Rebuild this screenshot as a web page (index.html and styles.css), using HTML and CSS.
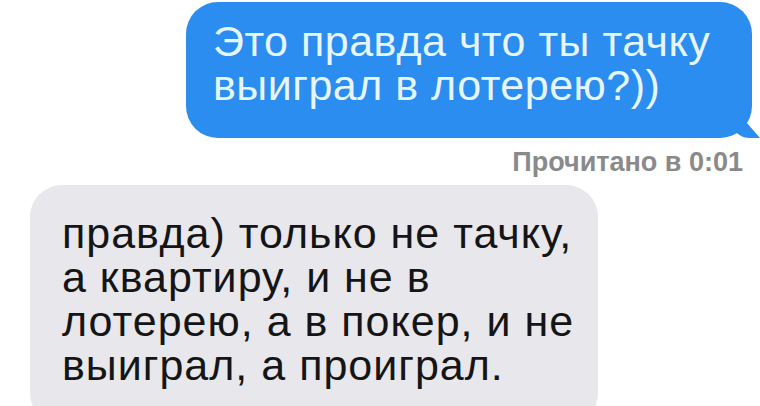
FILE: index.html
```html
<!DOCTYPE html>
<html lang="ru">
<head>
    <meta charset="UTF-8">
    <title>Сообщения</title>
    <link rel="stylesheet" href="styles.css">
</head>
<body>
    <div class="chat">
        <!-- Outgoing message -->
        <div class="row row-out">
            <div class="bubble bubble-out">
                Это правда что ты тачку<br>
                выиграл в лотерею?))
            </div>
        </div>
        <div class="receipt">Прочитано в 0:01</div>

        <!-- Incoming message -->
        <div class="row row-in">
            <div class="bubble bubble-in">
                правда) только не тачку,<br>
                а квартиру, и не в<br>
                лотерею, а в покер, и не<br>
                выиграл, а проиграл.
            </div>
        </div>
    </div>
</body>
</html>
```

FILE: styles.css
```css
:root {
    --color-out: #2b8def;
    --color-out-text: #e6f6ff;
    --color-in: #e7e7ec;
    --color-in-text: #151515;
    --color-receipt: #8a8a8a;
}

* {
    margin: 0;
    padding: 0;
    box-sizing: border-box;
}

body {
    width: 760px;
    height: 406px;
    overflow: hidden;
    background-color: #ffffff;
    font-family: "Liberation Sans", Arial, sans-serif;
}

.chat {
    display: flex;
    flex-direction: column;
    padding-top: 2px;
}

.row {
    display: flex;
}

.row-out {
    justify-content: flex-end;
    padding-right: 8px;
}

.row-in {
    padding-left: 30px;
    margin-top: 8px;
}

.bubble {
    position: relative;
    border-radius: 32px;
    font-size: 43px;
    line-height: 44px;
    letter-spacing: 0.5px;
}

.bubble-out {
    width: 566px;
    height: 136px;
    padding: 17px 0 0 27px;
    background-color: var(--color-out);
    color: var(--color-out-text);
}

/* tail in the bottom right corner */
.bubble-out::after {
    content: "";
    position: absolute;
    right: -8px;
    bottom: 0;
    width: 26px;
    height: 30px;
    background-color: var(--color-out);
    border-bottom-left-radius: 16px 12px;
    clip-path: polygon(0 0, 100% 100%, 0 100%);
}

.bubble-in {
    width: 568px;
    height: 240px;
    padding: 26px 0 0 32px;
    background-color: var(--color-in);
    color: var(--color-in-text);
    letter-spacing: 1px;
}

.receipt {
    align-self: flex-end;
    padding-right: 17px;
    margin-top: 9px;
    font-size: 27px;
    font-weight: bold;
    line-height: 30px;
    color: var(--color-receipt);
}
```
